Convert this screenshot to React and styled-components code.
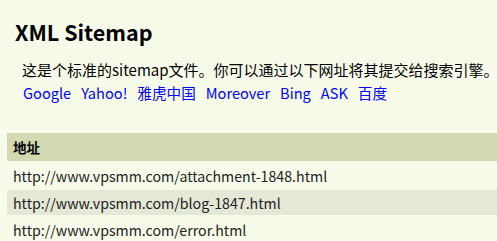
import React from 'react'
import styled, { createGlobalStyle } from 'styled-components'

const GlobalStyle = createGlobalStyle`
  html, body {
    margin: 0;
    padding: 0;
    background: #f7fbea;
    overflow: hidden;
  }
  body {
    font-family: "Noto Sans CJK SC", "Open Sans", sans-serif;
    color: #000;
  }
`

const Page = styled.div`
  width: 760px;
  padding: 0 0 0 7px;
`

const Intro = styled.div`
  padding: 0 0 0 8px;
`

const Title = styled.h1`
  margin: 0;
  padding-top: 18px;
  font-size: 21.5px;
  font-weight: bold;
  line-height: 28px;
`

const Desc = styled.p`
  margin: 13px 0 0 15px;
  font-size: 15px;
  line-height: 22px;
  white-space: nowrap;
`

const Links = styled.div`
  margin: 1px 0 0 16px;
  font-size: 14.6px;
  line-height: 22px;
  white-space: nowrap;
`

const Link = styled.a`
  color: #0000ff;
  text-decoration: none;
  margin-right: 10px;
`

const Table = styled.table`
  margin-top: 27px;
  width: 100%;
  border-collapse: separate;
  border-spacing: 0 2px;
  font-size: 14.2px;
`

const HeadCell = styled.th`
  background: #d3d9b0;
  text-align: left;
  height: 28px;
  padding: 0 6px;
  font-weight: bold;
  font-size: 13.5px;
`

const Cell = styled.td`
  background: ${props => (props.$alt ? '#e6e8d7' : 'transparent')};
  height: 24px;
  padding: 1px 6px 0;
  color: #222;
`

const links = ['Google', 'Yahoo!', '雅虎中国', 'Moreover', 'Bing', 'ASK', '百度']
const urls = [
  'http://www.vpsmm.com/attachment-1848.html',
  'http://www.vpsmm.com/blog-1847.html',
  'http://www.vpsmm.com/error.html',
]

export default function App() {
  return (
    <Page>
      <GlobalStyle />
      <Intro>
        <Title>XML Sitemap</Title>
      </Intro>
      <Desc>这是个标准的sitemap文件。你可以通过以下网址将其提交给搜索引擎。</Desc>
      <Links>
        {links.map(l => (
          <Link key={l} href="#">{l}</Link>
        ))}
      </Links>
      <Table>
        <thead>
          <tr>
            <HeadCell>地址</HeadCell>
          </tr>
        </thead>
        <tbody>
          {urls.map((u, i) => (
            <tr key={u}>
              <Cell $alt={i % 2 === 1}>{u}</Cell>
            </tr>
          ))}
        </tbody>
      </Table>
    </Page>
  )
}
